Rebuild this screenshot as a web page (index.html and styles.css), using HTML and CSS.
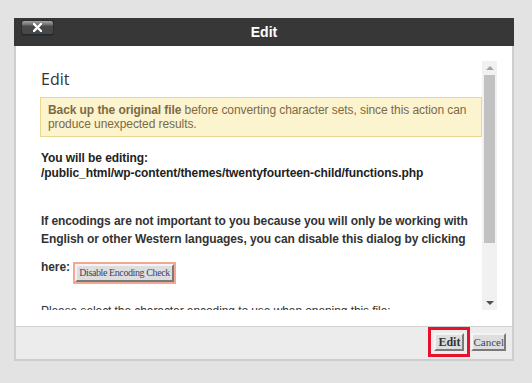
FILE: index.html
```html
<!DOCTYPE html>
<html lang="en">
<head>
  <meta charset="UTF-8" />
  <title>Edit</title>
  <link rel="stylesheet" href="styles.css">
</head>
<body>
  <div class="dialog">
    <div class="titlebar">
      <div class="titlebar-left">
        <button class="close-btn" title="Close">
          <svg width="9" height="9" viewBox="0 0 9 9"><path d="M1 1 L8 8 M8 1 L1 8" stroke="#fff" stroke-width="2.4" stroke-linecap="square"/></svg>
        </button>
      </div>
      <span class="title">Edit</span>
      <div></div>
    </div>

    <div class="dialog-body">
      <div class="scroll-area">
        <div class="content">
          <h3>Edit</h3>
          <div class="warning">
            <strong>Back up the original file</strong> before converting character sets, since this action can produce unexpected results.
          </div>
          <div class="editing">
            You will be editing:<br>
            /public_html/wp-content/themes/twentyfourteen-child/functions.php
          </div>
          <div class="note">
            If encodings are not important to you because you will only be working with English or other Western languages, you can disable this dialog by clicking
          </div>
          <div class="note here">
            here: <button class="btn btn-small">Disable Encoding Check</button>
          </div>
          <p class="select">Please select the character encoding to use when opening this file:</p>
        </div>
      </div>
      <div class="scrollbar">
        <div class="arrow up"></div>
        <div class="track"><div class="thumb"></div></div>
        <div class="arrow down"></div>
      </div>
    </div>

    <div class="footer">
      <button class="btn btn-edit">Edit</button>
      <button class="btn btn-cancel">Cancel</button>
    </div>
  </div>
</body>
</html>
```

FILE: styles.css
```css
body {
  margin: 0;
  background: #e3e3e3;
  font-family: 'Liberation Sans', Arial, sans-serif;
  color: #333;
}

.dialog {
  width: 500px;
  margin: 18px 0 0 14px;
}

.titlebar {
  height: 28px;
  background: #373737;
  display: grid;
  grid-template-columns: 1fr auto 1fr;
  align-items: start;
}

.titlebar-left {
  padding: 2px 0 0 7px;
}

.close-btn {
  width: 33px;
  height: 15px;
  padding: 0;
  border: 1px solid #2c2c2c;
  border-bottom-color: #1f2a33;
  border-radius: 3px;
  background: linear-gradient(to bottom, #a5a5a5 0, #6c6c6c 4px, #4a4948 5px, #484746 100%);
  display: flex;
  align-items: center;
  justify-content: center;
  box-shadow: 0 1px 0 #243038;
}

.title {
  color: #fff;
  font-weight: bold;
  font-size: 14px;
  line-height: 28px;
}

.dialog-body {
  height: 249px;
  background: #fff;
  border-left: 2px solid #cdcdcd;
  border-right: 2px solid #cdcdcd;
  padding: 15px 15px 16px 0;
  display: flex;
}

.scroll-area {
  flex: 1;
  overflow: hidden;
}

.content {
  padding-left: 24px;
  letter-spacing: -0.08px;
}

h3 {
  font-family: 'Open Sans', sans-serif;
  font-weight: normal;
  font-size: 16px;
  line-height: 22px;
  margin: 7px 0 7px 1px;
  color: #333;
  letter-spacing: 0;
}

.warning {
  background: #fcf3cf;
  border: 1px solid #e8d98c;
  color: #7d6a43;
  font-size: 12px;
  line-height: 14px;
  padding: 5px 7px;
}

.editing {
  font-weight: bold;
  font-size: 12px;
  line-height: 15px;
  margin: 14px 0 0 1px;
  color: #222;
}

.note {
  font-weight: bold;
  font-size: 12px;
  line-height: 18px;
  margin: 31px 0 0 1px;
  color: #333;
}

.note.here {
  margin-top: 10px;
}

.select {
  font-size: 12px;
  line-height: 18px;
  margin: 20px 0 0 1px;
}

.btn {
  font-family: 'Liberation Serif', 'Times New Roman', serif;
  font-size: 12px;
  line-height: 14px;
  background: #dedede;
  border: 2px solid;
  border-color: #f4f4f4 #7a7a7a #7a7a7a #f4f4f4;
  padding: 0 1px;
  color: #333;
  letter-spacing: 0;
}

.btn-small {
  font-size: 10px;
  letter-spacing: -0.4px;
  line-height: 14px;
  padding: 0 2px;
  vertical-align: top;
  margin: 6px 0 0 2px;
  color: #3a4560;
  outline: 2px solid #f2a893;
}

.scrollbar {
  width: 15px;
  background: #f1f1f1;
  display: flex;
  flex-direction: column;
}

.arrow {
  height: 14px;
  display: flex;
  align-items: center;
  justify-content: center;
}

.arrow.up::before,
.arrow.down::before {
  content: "";
  border-left: 4px solid transparent;
  border-right: 4px solid transparent;
}

.arrow.up::before {
  border-bottom: 4px solid #a3a3a3;
}

.arrow.down::before {
  border-top: 4px solid #505050;
}

.track {
  flex: 1;
  padding: 0 2px;
}

.thumb {
  height: 168px;
  background: #c1c1c1;
}

.footer {
  background: #ececec;
  border: 2px solid #cdcdcd;
  border-top: 1px solid #d0d0d0;
  height: 26px;
  padding-top: 6px;
  padding-right: 6px;
  display: flex;
  justify-content: flex-end;
  align-items: flex-start;
  gap: 7px;
}

.btn-edit {
  font-weight: bold;
  padding: 0 2px;
  outline: 3px solid #e8112d;
  outline-offset: 3px;
}

.btn-cancel {
  font-size: 11px;
  padding: 0;
  color: #3a4560;
}
```
